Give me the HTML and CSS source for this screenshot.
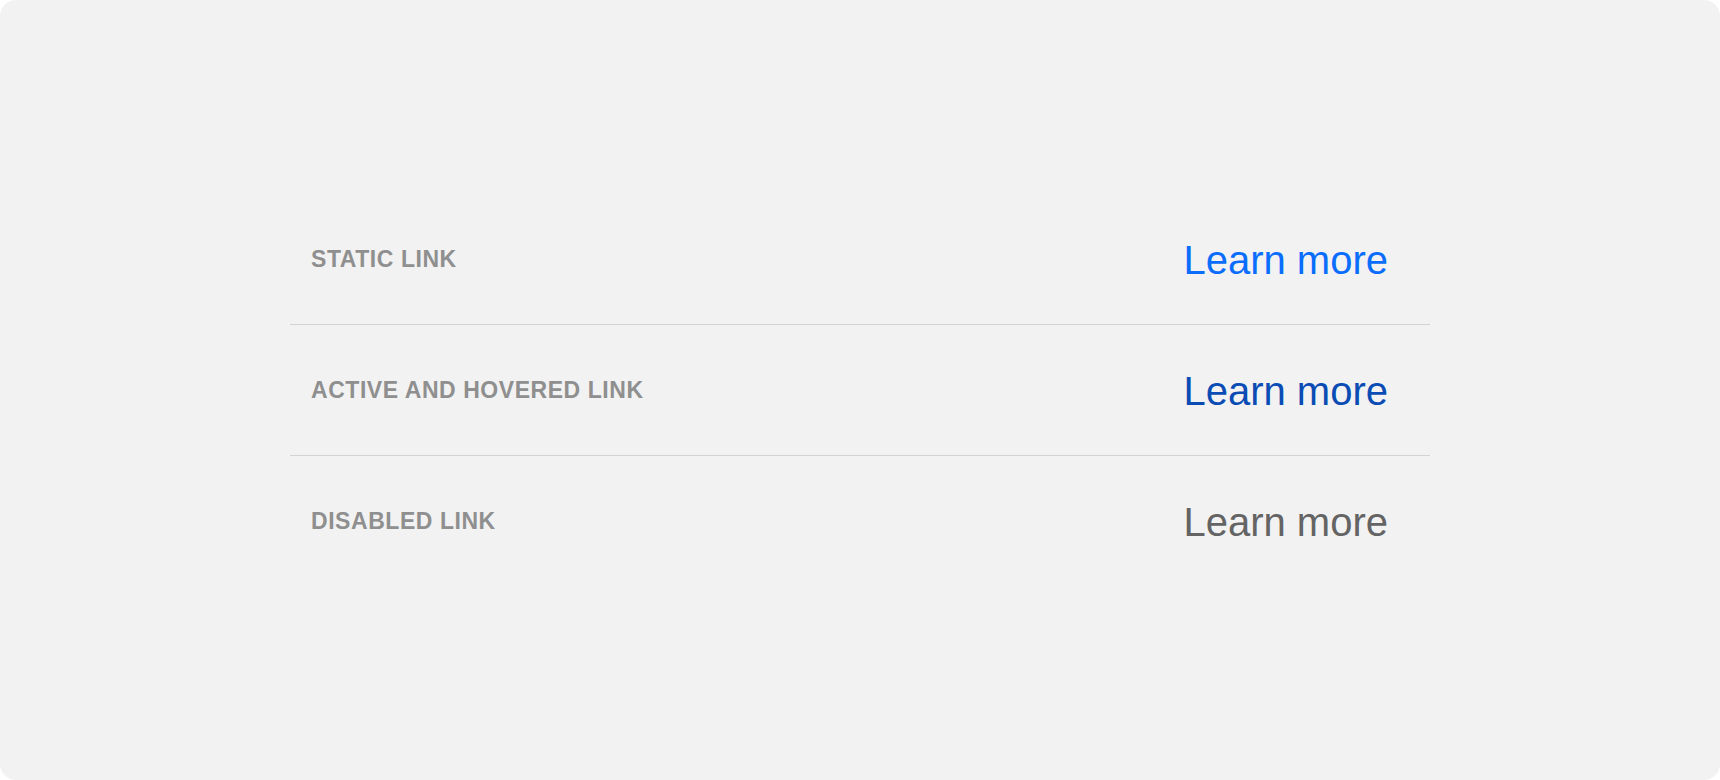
FILE: index.html
```html
<!DOCTYPE html>
<html lang="en">
<head>
<meta charset="utf-8">
<title>Links</title>
<link rel="stylesheet" href="styles.css">
</head>
<body>
<div class="page">
  <div class="list">
    <div class="row">
      <span class="label">STATIC LINK</span>
      <a class="link link-static" href="#">Learn more</a>
    </div>
    <div class="row">
      <span class="label">ACTIVE AND HOVERED LINK</span>
      <a class="link link-active" href="#">Learn more</a>
    </div>
    <div class="row">
      <span class="label">DISABLED LINK</span>
      <span class="link link-disabled">Learn more</span>
    </div>
  </div>
</div>
</body>
</html>
```

FILE: styles.css
```css
html, body {
  margin: 0;
  padding: 0;
  background: #ffffff;
}

.page {
  width: 1720px;
  height: 780px;
  background: #f2f2f2;
  border-radius: 16px;
  display: flex;
  align-items: center;
  justify-content: center;
  font-family: "Liberation Sans", Arial, Helvetica, sans-serif;
}

.list {
  width: 1140px;
  display: flex;
  flex-direction: column;
}

.row {
  height: 130px;
  display: flex;
  align-items: center;
  justify-content: space-between;
  padding: 0 42px 0 21px;
  border-bottom: 1px solid #d3d3d3;
}

.row:last-child {
  border-bottom: none;
}

.label {
  font-size: 23px;
  font-weight: 700;
  color: #8f8f8f;
  letter-spacing: 0.55px;
}

.link {
  font-size: 40px;
  text-decoration: none;
  line-height: 1;
  padding-top: 2px;
}

.link-static {
  color: #0a6dfb;
}

.link-active {
  color: #0a4cb4;
}

.link-disabled {
  color: #646464;
}
```
